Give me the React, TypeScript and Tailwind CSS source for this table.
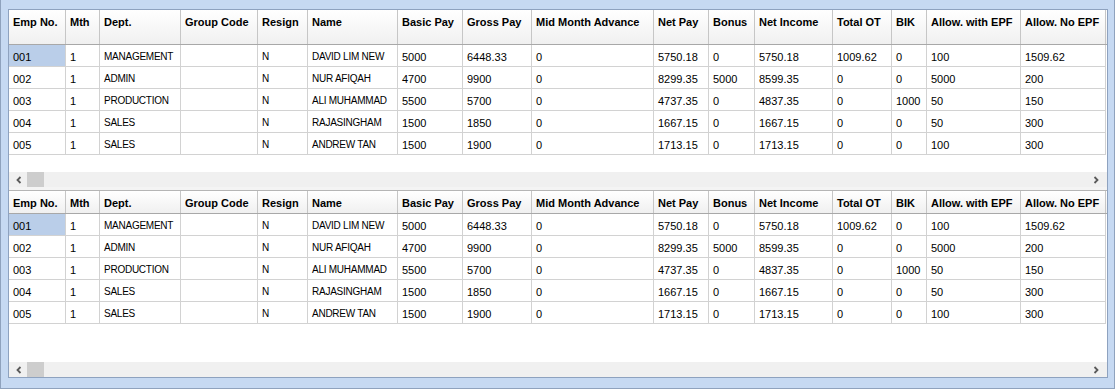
import React from "react";

const cols = [
  { h: "Emp No.", w: 57 },
  { h: "Mth", w: 34 },
  { h: "Dept.", w: 81 },
  { h: "Group Code", w: 77 },
  { h: "Resign", w: 50 },
  { h: "Name", w: 90 },
  { h: "Basic Pay", w: 65 },
  { h: "Gross Pay", w: 69 },
  { h: "Mid Month Advance", w: 122 },
  { h: "Net Pay", w: 55 },
  { h: "Bonus", w: 46 },
  { h: "Net Income", w: 78 },
  { h: "Total OT", w: 59 },
  { h: "BIK", w: 35 },
  { h: "Allow. with EPF", w: 94 },
  { h: "Allow. No EPF", w: 85 },
];

const rows = [
  ["001", "1", "MANAGEMENT", "", "N", "DAVID LIM NEW", "5000", "6448.33", "0", "5750.18", "0", "5750.18", "1009.62", "0", "100", "1509.62"],
  ["002", "1", "ADMIN", "", "N", "NUR AFIQAH", "4700", "9900", "0", "8299.35", "5000", "8599.35", "0", "0", "5000", "200"],
  ["003", "1", "PRODUCTION", "", "N", "ALI MUHAMMAD", "5500", "5700", "0", "4737.35", "0", "4837.35", "0", "1000", "50", "150"],
  ["004", "1", "SALES", "", "N", "RAJASINGHAM", "1500", "1850", "0", "1667.15", "0", "1667.15", "0", "0", "50", "300"],
  ["005", "1", "SALES", "", "N", "ANDREW TAN", "1500", "1900", "0", "1713.15", "0", "1713.15", "0", "0", "100", "300"],
];

const textCols = new Set([2, 4, 5]);

function ScrollBar() {
  return (
    <div className="h-[15px] bg-[#f0f0f0] flex items-center shrink-0">
      <div className="w-[18px] flex items-center justify-center pl-[2px]">
        <svg width="6" height="8" viewBox="0 0 6 8">
          <polyline points="4.5,1 1.5,4 4.5,7" fill="none" stroke="#5a5a5a" strokeWidth="1.8" />
        </svg>
      </div>
      <div className="w-[17px] h-[15px] bg-[#cdcdcd]" />
      <div className="flex-1" />
      <div className="w-[18px] flex items-center justify-center pr-[4px]">
        <svg width="6" height="8" viewBox="0 0 6 8">
          <polyline points="1.5,1 4.5,4 1.5,7" fill="none" stroke="#5a5a5a" strokeWidth="1.8" />
        </svg>
      </div>
    </div>
  );
}

function Grid({ tall, height }: { tall: boolean; height: number }) {
  return (
    <div className="flex flex-col bg-white shrink-0" style={{ height }}>
      <div
        className={
          "flex border-b border-[#a8a8a8] bg-gradient-to-b from-white to-[#f0f0f0] shrink-0 " +
          (tall ? "h-[35px] items-start" : "h-[23px] items-stretch")
        }
      >
        {cols.map((c, i) => (
          <div
            key={i}
            className={
              "border-r border-[#c6c6c6] px-[4px] font-bold text-black whitespace-nowrap overflow-hidden self-stretch flex " +
              (tall ? "pt-[7px] items-start" : "items-center pt-[3px]")
            }
            style={{ width: c.w }}
          >
            {c.h}
          </div>
        ))}
      </div>
      {rows.map((r, ri) => (
        <div key={ri} className="flex h-[22px] shrink-0">
          {r.map((v, ci) => (
            <div
              key={ci}
              className={
                "border-r border-b border-[#d2d2d2] px-[4px] pt-[3px] flex items-center whitespace-nowrap overflow-hidden text-black " +
                (textCols.has(ci) ? "text-[10px] tracking-[-0.25px] " : "") +
                (ri === 0 && ci === 0 ? "bg-[#bacee9]" : "")
              }
              style={{ width: cols[ci].w }}
            >
              {v}
            </div>
          ))}
        </div>
      ))}
      <div className="flex-1" />
      <ScrollBar />
    </div>
  );
}

export default function App() {
  return (
    <div
      className="w-[1115px] h-[389px] bg-[#c6d9f2] border-l border-r border-b border-[#8fa2bd] pt-[9px] pl-[7px] pr-[6px] pb-[10px] text-[11px] leading-none"
      style={{ fontFamily: '"Liberation Sans", Arial, sans-serif' }}
    >
      <div className="border border-[#8ea2bf] bg-white flex flex-col h-[369px] overflow-hidden">
        <Grid tall={true} height={177} />
        <div className="h-[4px] bg-[#f4f4f4] border-b border-[#b5b5b5] shrink-0" />
        <Grid tall={false} height={186} />
      </div>
    </div>
  );
}
